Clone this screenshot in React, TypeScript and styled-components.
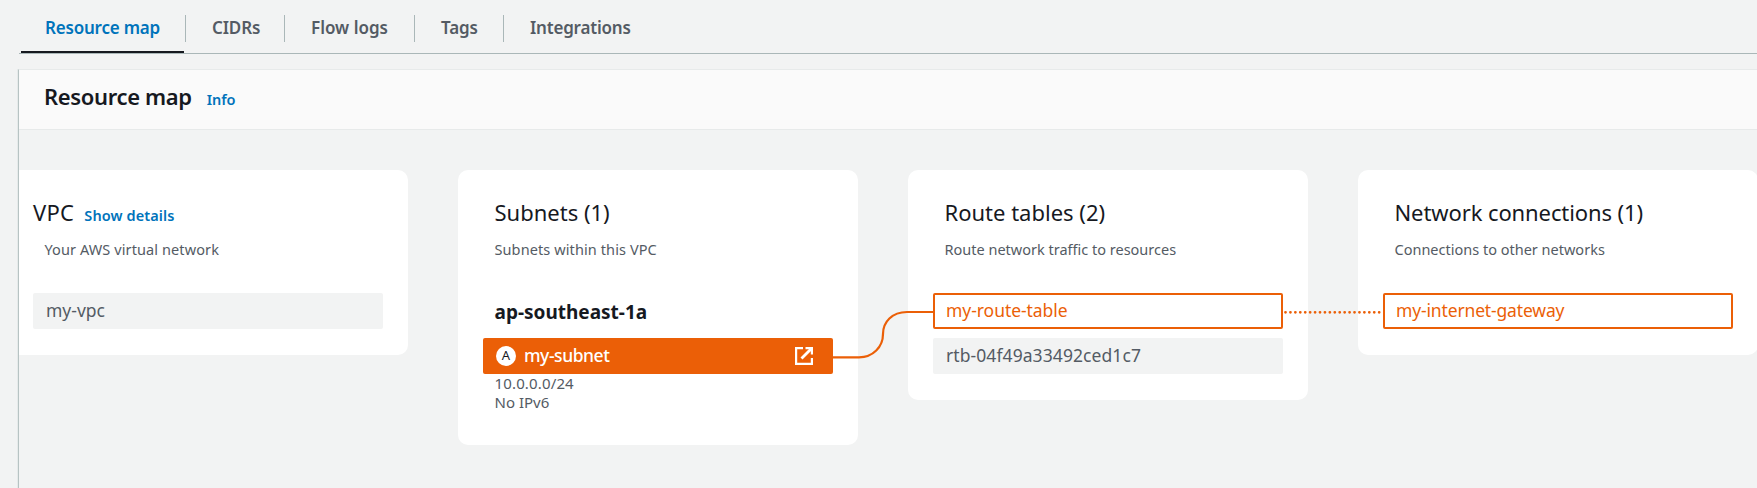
import React from "react";
import styled, { createGlobalStyle, css } from "styled-components";

const color = {
  page: "#f2f3f3",
  line: "#aab7b8",
  hairline: "#e7eaea",
  ink: "#16191f",
  muted: "#545b64",
  link: "#0073bb",
  accent: "#eb5f07",
};

const GlobalStyle = createGlobalStyle`
  * { box-sizing: border-box; }
  html, body { margin: 0; overflow: hidden; background: ${color.page}; }
  body { font-family: "Noto Sans", "Open Sans", sans-serif; color: ${color.ink}; }
  h2, h3, h4, p { margin: 0; }
`;

const Page = styled.div`
  height: 488px;
  overflow: hidden;
  display: flex;
  flex-direction: column;
  padding-left: 18px;
`;

const TabBar = styled.nav`
  display: flex;
  height: 54px;
  flex: none;
  margin-left: 1px;
  padding: 15px 0 0 1px;
  border-bottom: 1px solid ${color.line};
`;

const Tab = styled.div<{ $width: number; $active?: boolean; $spacing?: number }>`
  width: ${(p) => p.$width}px;
  height: 27px;
  padding-left: 26px;
  line-height: 25px;
  font-size: 17px;
  font-weight: 600;
  letter-spacing: ${(p) => p.$spacing ?? 0}px;
  white-space: nowrap;
  color: ${(p) => (p.$active ? color.link : color.muted)};
  & + & { border-left: 1px solid ${color.line}; }
  ${(p) =>
    p.$active &&
    css`
      height: 38px;
      margin: 0 1px;
      padding-left: 24px;
      border-bottom: 2px solid ${color.ink};
    `}
`;

const Panel = styled.section`
  flex: 1;
  display: flex;
  flex-direction: column;
  margin-top: 15px;
  border-left: 1px solid #b7c3c3;
  border-top: 1px solid ${color.hairline};
  box-shadow: -1px 0 0 #e6eaea;
`;

const PanelHeader = styled.header`
  display: flex;
  align-items: baseline;
  height: 60px;
  flex: none;
  padding: 11px 0 0 25px;
  background: #fafafa;
  border-bottom: 1px solid ${color.hairline};
`;

const PanelTitle = styled.h2`
  font-size: 22px;
  line-height: 30px;
  font-weight: 600;
  letter-spacing: -0.35px;
`;

const Link = styled.span<{ $gap: number; $spacing?: number }>`
  margin-left: ${(p) => p.$gap}px;
  font-size: 14.5px;
  line-height: 20px;
  font-weight: 600;
  letter-spacing: ${(p) => p.$spacing ?? 0}px;
  color: ${color.link};
`;

const Map = styled.div`
  position: relative;
  flex: 1;
  display: flex;
  align-items: flex-start;
  gap: 50px;
  padding: 40px 0 0;
  overflow: hidden;
`;

const Card = styled.article<{ $bottom?: number; $clipped?: boolean }>`
  flex: none;
  width: 400px;
  padding: 27px 25px ${(p) => p.$bottom ?? 26}px;
  margin-left: ${(p) => (p.$clipped ? -11 : 0)}px;
  background: #fff;
  border-radius: 10px;
`;

const CardTitle = styled.h3<{ $indent?: number; $spacing?: number }>`
  display: flex;
  align-items: baseline;
  height: 30px;
  padding-left: ${(p) => p.$indent ?? 11.5}px;
  font-size: 22px;
  line-height: 30px;
  font-weight: 400;
  letter-spacing: ${(p) => p.$spacing ?? 0}px;
  white-space: nowrap;
`;

const CardText = styled.p<{ $spacing?: number }>`
  margin: 12px 0 34px;
  padding-left: 11.5px;
  font-size: 14.5px;
  line-height: 20px;
  letter-spacing: ${(p) => p.$spacing ?? 0}px;
  color: ${color.muted};
`;

const Zone = styled.h4`
  height: 38px;
  margin-top: 41px;
  padding-left: 11.5px;
  font-size: 19px;
  line-height: 24px;
  font-weight: 700;
`;

const Node = styled.div<{ $kind?: "outlined" | "filled"; $spacing?: number }>`
  display: flex;
  align-items: center;
  width: 350px;
  height: 36px;
  padding: 0 13px 2px;
  border-radius: 2px;
  font-size: 17.5px;
  line-height: 24px;
  letter-spacing: ${(p) => p.$spacing ?? 0}px;
  background: ${color.page};
  color: ${color.muted};
  & + & { margin-top: 9px; }
  ${(p) =>
    p.$kind === "outlined" &&
    css`
      padding: 0 11px 2px;
      background: #fff;
      color: ${color.accent};
      border: 2px solid ${color.accent};
    `}
  ${(p) =>
    p.$kind === "filled" &&
    css`
      padding: 0 20px 0 13px;
      background: ${color.accent};
      color: #fff;
      font-weight: 500;
    `}
`;

const NodeName = styled.span`
  flex: 1;
  margin-left: 8px;
  padding-bottom: 2px;
`;

const Badge = styled.span`
  width: 20px;
  height: 20px;
  border-radius: 50%;
  background: #fff;
  color: ${color.ink};
  font-size: 13px;
  line-height: 19px;
  font-weight: 400;
  letter-spacing: 0;
  text-align: center;
`;

const Cidr = styled.p<{ $spacing?: number }>`
  padding-left: 11.5px;
  font-size: 15px;
  line-height: 19px;
  letter-spacing: ${(p) => p.$spacing ?? 0}px;
  color: ${color.muted};
`;

const Connectors = styled.svg`
  position: absolute;
  left: 0;
  top: 0;
  pointer-events: none;
`;

const ExternalIcon = () => (
  <svg width="18" height="18" viewBox="0 0 18 18" fill="none" stroke="#fff" strokeWidth="2.2">
    <path d="M8 1.1H1.1v15.8h15.8v-6" />
    <path d="M10.5 1.1h6.4v6.4" strokeWidth="2.2" />
    <path d="M16.5 1.5 6.5 11.5" strokeWidth="2.9" />
  </svg>
);

export default function App() {
  return (
    <>
      <GlobalStyle />
      <Page>
        <TabBar>
          <Tab $width={163} $active $spacing={-0.2}>Resource map</Tab>
          <Tab $width={99} $spacing={-0.15}>CIDRs</Tab>
          <Tab $width={130}>Flow logs</Tab>
          <Tab $width={89} $spacing={-0.1}>Tags</Tab>
          <Tab $width={154} $spacing={-0.2}>Integrations</Tab>
        </TabBar>
        <Panel>
          <PanelHeader>
            <PanelTitle>Resource map</PanelTitle>
            <Link $gap={15} $spacing={-0.1}>Info</Link>
          </PanelHeader>
          <Map>
            <Card $clipped>
              <CardTitle $indent={0} $spacing={0.3}>
                VPC<Link $gap={10} $spacing={0.1}>Show details</Link>
              </CardTitle>
              <CardText $spacing={0.1}>Your AWS virtual network</CardText>
              <Node>my-vpc</Node>
            </Card>
            <Card $bottom={33}>
              <CardTitle>Subnets (1)</CardTitle>
              <CardText $spacing={0.1}>Subnets within this VPC</CardText>
              <Zone>ap-southeast-1a</Zone>
              <Node $kind="filled" $spacing={-0.45}>
                <Badge>A</Badge>
                <NodeName>my-subnet</NodeName>
                <ExternalIcon />
              </Node>
              <Cidr $spacing={0.15}>10.0.0.0/24</Cidr>
              <Cidr>No IPv6</Cidr>
            </Card>
            <Card>
              <CardTitle>Route tables (2)</CardTitle>
              <CardText>Route network traffic to resources</CardText>
              <Node $kind="outlined" $spacing={-0.05}>my-route-table</Node>
              <Node $spacing={0.08}>rtb-04f49a33492ced1c7</Node>
            </Card>
            <Card>
              <CardTitle $spacing={-0.1}>Network connections (1)</CardTitle>
              <CardText>Connections to other networks</CardText>
              <Node $kind="outlined" $spacing={-0.15}>my-internet-gateway</Node>
            </Card>
            <Connectors width="1738" height="358" fill="none" stroke={color.accent} strokeWidth="2">
              <path d="M814 227.3H840C854 227.3 864 217 864 204C864 192 873 182 888 182H914" strokeWidth="2.2" />
              <path d="M1266.5 182.3H1363" strokeWidth="2.8" strokeLinecap="round" strokeDasharray="0 4.93" />
            </Connectors>
          </Map>
        </Panel>
      </Page>
    </>
  );
}
